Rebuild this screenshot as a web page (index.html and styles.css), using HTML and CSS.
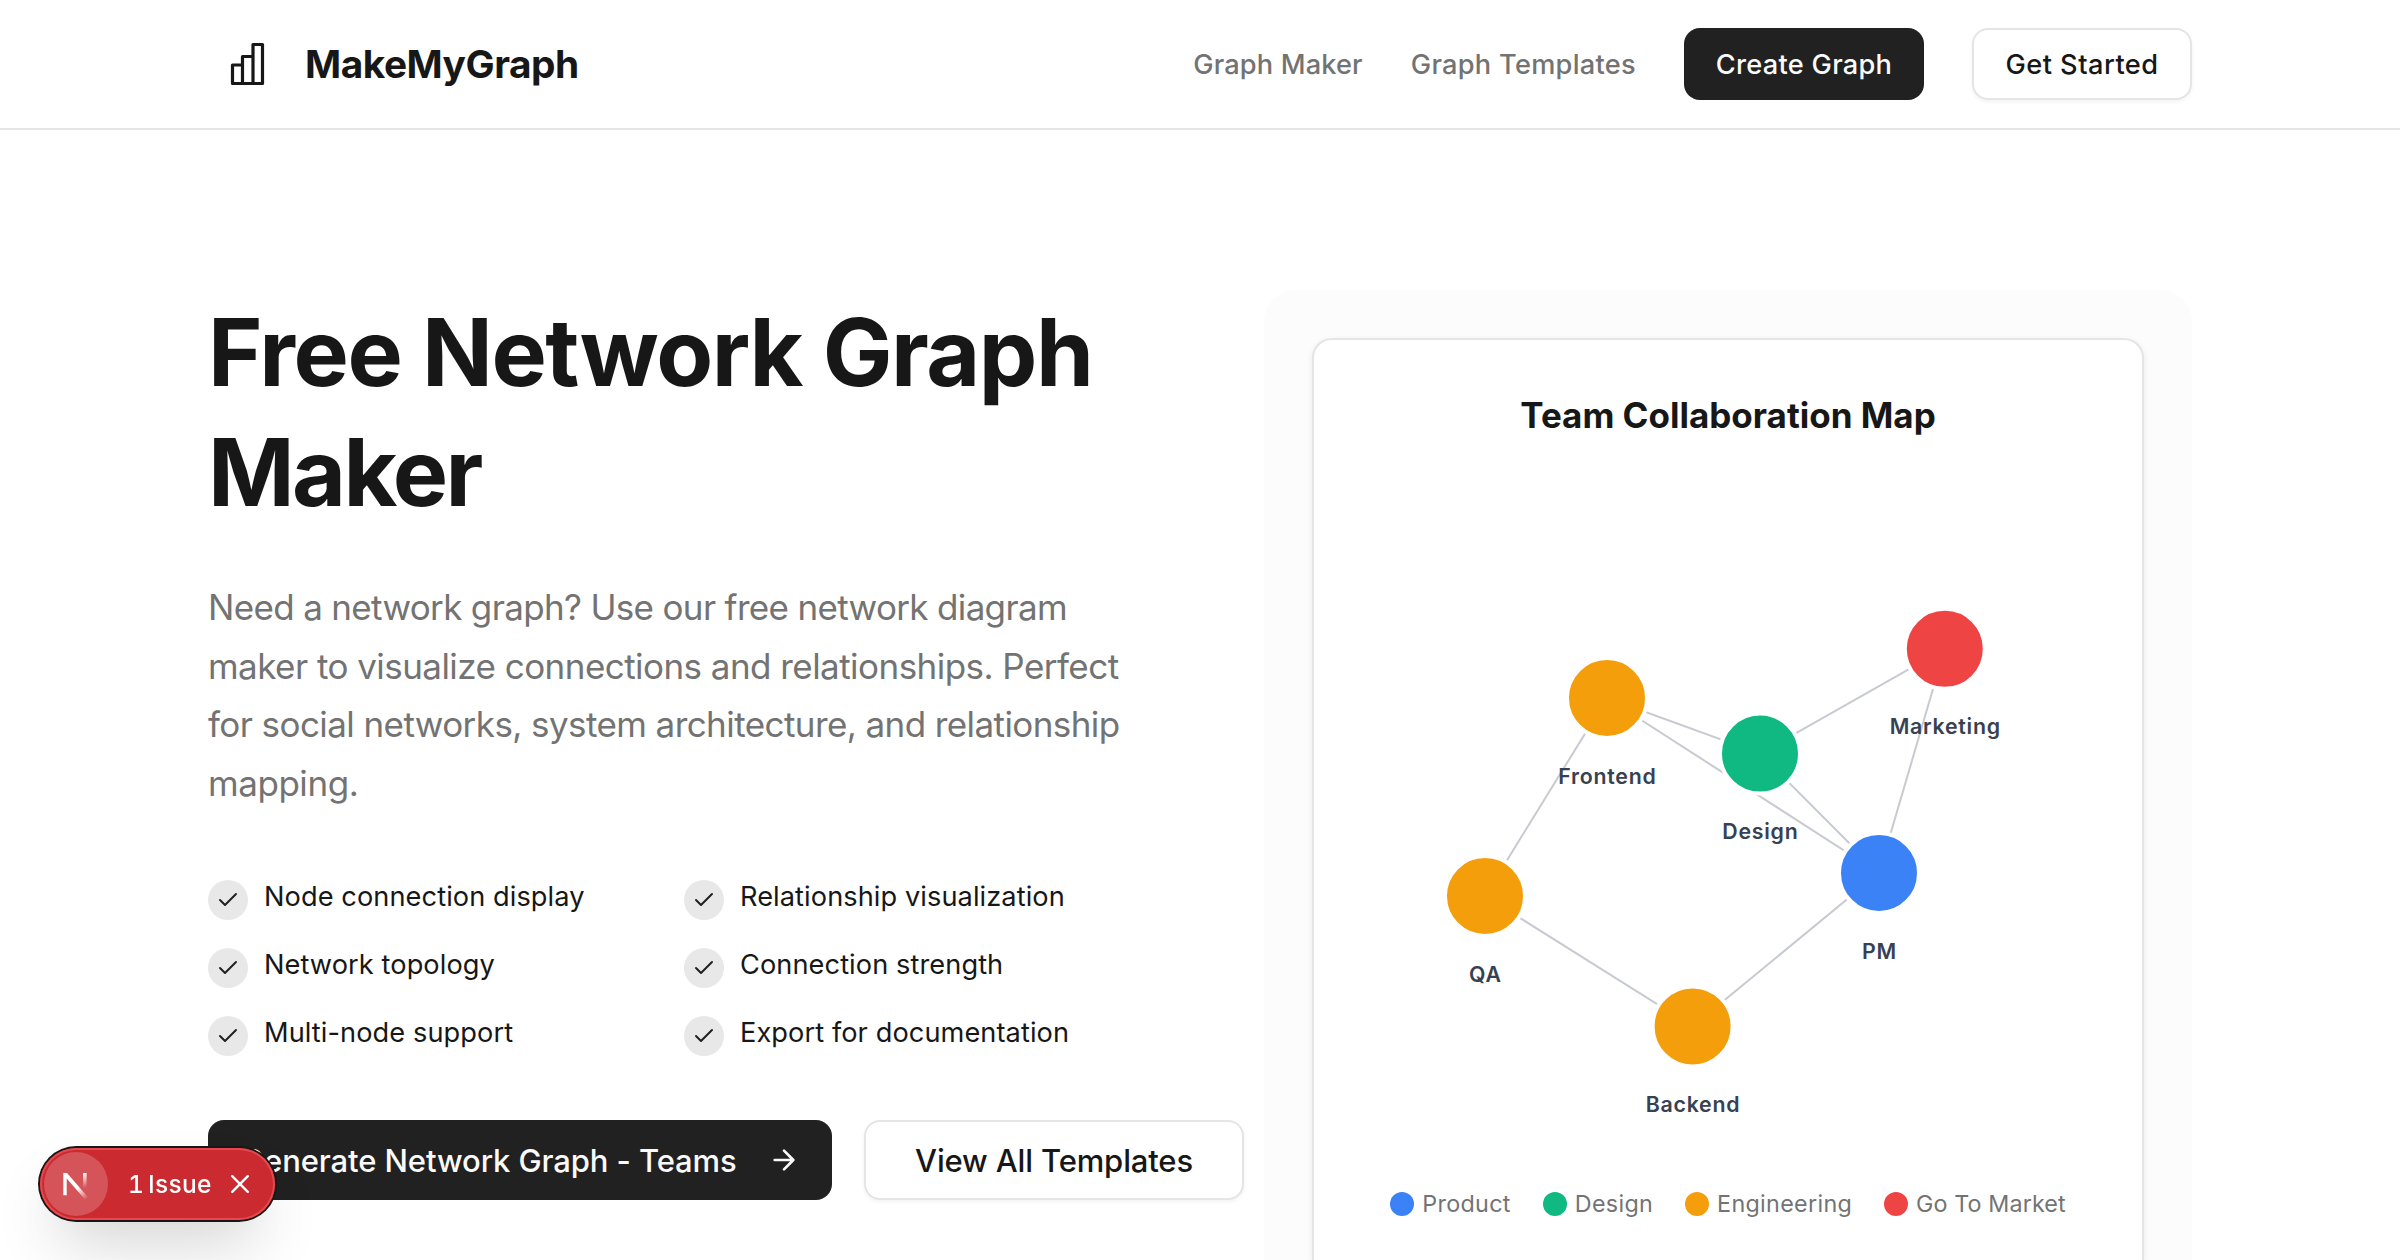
FILE: index.html
```html
<!DOCTYPE html>
<html lang="en">
<head>
<meta charset="utf-8">
<title>MakeMyGraph</title>
<link rel="stylesheet" href="styles.css">
</head>
<body>
<header class="header">
  <div class="container header-inner">
    <a class="brand">
      <svg class="brand-icon" width="40" height="48" viewBox="0 0 40 48" fill="none" stroke="currentColor" stroke-width="3.2" stroke-linejoin="round">
        <path d="M4.5 25H14.5V43.5H4.5ZM14.5 16.5H25V43.5H14.5ZM25 4.5H34.5V43.5H25Z"/>
      </svg>
      <span class="brand-name">MakeMyGraph</span>
    </a>
    <nav class="nav">
      <a class="nav-link nav-maker">Graph Maker</a>
      <a class="nav-link">Graph Templates</a>
      <a class="btn btn-dark nav-create">Create Graph</a>
      <a class="btn btn-outline nav-start">Get Started</a>
    </nav>
  </div>
</header>

<main class="container hero">
  <section class="intro">
    <h1 class="title">Free Network Graph<br><span class="title-end">Maker</span></h1>
    <p class="lead"><span class="lead-first">Need a network graph? Use our free network diagram</span><br><span class="lead-second">maker to visualize connections and relationships. Perfect</span><br>for social networks, system architecture, and relationship<br><span class="lead-last">mapping.</span></p>
    <ul class="features">
      <li class="feature"><span class="tick"><svg width="24" height="24" viewBox="0 0 24 24"><path d="M20 6 9 17l-5-5"/></svg></span>Node connection display</li>
      <li class="feature"><span class="tick"><svg width="24" height="24" viewBox="0 0 24 24"><path d="M20 6 9 17l-5-5"/></svg></span>Relationship visualization</li>
      <li class="feature"><span class="tick"><svg width="24" height="24" viewBox="0 0 24 24"><path d="M20 6 9 17l-5-5"/></svg></span>Network topology</li>
      <li class="feature"><span class="tick"><svg width="24" height="24" viewBox="0 0 24 24"><path d="M20 6 9 17l-5-5"/></svg></span>Connection strength</li>
      <li class="feature"><span class="tick"><svg width="24" height="24" viewBox="0 0 24 24"><path d="M20 6 9 17l-5-5"/></svg></span>Multi-node support</li>
      <li class="feature"><span class="tick"><svg width="24" height="24" viewBox="0 0 24 24"><path d="M20 6 9 17l-5-5"/></svg></span>Export for documentation</li>
    </ul>
    <div class="actions">
      <a class="btn btn-dark btn-generate">Generate Network Graph - Teams
        <svg width="32" height="32" viewBox="0 0 24 24" fill="none" stroke="currentColor" stroke-width="2" stroke-linecap="round" stroke-linejoin="round"><path d="M5 12h14M12 5l7 7-7 7"/></svg>
      </a>
      <a class="btn btn-outline btn-view">View All Templates</a>
    </div>
  </section>

  <section class="panel">
    <div class="card">
      <h2 class="card-title">Team Collaboration Map</h2>
      <svg class="graph" width="732" height="717" viewBox="0 -1 732 717">
        <g class="edges">
          <path d="M245 254 398 309.6"/>
          <path d="M245 254 517 429"/>
          <path d="M398 309.6 582.8 204.8"/>
          <path d="M398 309.6 517 429"/>
          <path d="M582.8 204.8 517 429"/>
          <path d="M245 254 123 452"/>
          <path d="M123 452 330.6 582.4"/>
          <path d="M330.6 582.4 517 429"/>
        </g>
        <g class="nodes">
          <circle class="engineering" cx="245" cy="254" r="40"/>
          <circle class="design" cx="398" cy="309.6" r="40"/>
          <circle class="market" cx="582.8" cy="204.8" r="40"/>
          <circle class="product" cx="517" cy="429" r="40"/>
          <circle class="engineering" cx="123" cy="452" r="40"/>
          <circle class="engineering" cx="330.6" cy="582.4" r="40"/>
        </g>
        <g class="labels">
          <text x="245.4" y="340">Frontend</text>
          <text x="398.4" y="395.4">Design</text>
          <text x="583.2" y="290.4">Marketing</text>
          <text x="517.4" y="515">PM</text>
          <text x="123.4" y="538">QA</text>
          <text x="331" y="668.4">Backend</text>
        </g>
      </svg>
      <div class="legend">
        <span class="legend-item"><i class="dot dot-product"></i>Product</span>
        <span class="legend-item"><i class="dot dot-design"></i>Design</span>
        <span class="legend-item"><i class="dot dot-engineering"></i>Engineering</span>
        <span class="legend-item legend-market"><i class="dot dot-market"></i>Go To Market</span>
      </div>
    </div>
  </section>
</main>

<div class="issue-badge">
  <span class="issue-logo">
    <svg width="64" height="64" viewBox="0 0 64 64">
      <defs>
        <linearGradient id="diag" gradientUnits="userSpaceOnUse" x1="34" y1="36" x2="43" y2="47"><stop offset="0" stop-color="#fff"/><stop offset="1" stop-color="#fff" stop-opacity="0"/></linearGradient>
        <linearGradient id="stem" gradientUnits="userSpaceOnUse" x1="40" y1="21" x2="40" y2="36"><stop offset="0" stop-color="#fff"/><stop offset="1" stop-color="#fff" stop-opacity="0"/></linearGradient>
      </defs>
      <path d="M19.3 21H23L44 45.3 41 47.6 22.7 26.6V43.3H19.3Z" fill="url(#diag)"/>
      <path d="M39 21H42.6V36H39Z" fill="url(#stem)"/>
    </svg>
  </span>
  <span class="issue-text">1 Issue</span>
  <svg class="issue-close" width="20" height="20" viewBox="0 0 20 20" fill="none" stroke="#fff" stroke-width="2.4" stroke-linecap="round"><path d="M2.2 2.2 17.8 17.8M17.8 2.2 2.2 17.8"/></svg>
</div>
</body>
</html>
```
FILE: styles.css
```css
* { box-sizing: border-box; }

body {
  margin: 0;
  height: 1260px;
  overflow: hidden;
  background: #fff;
  color: #171717;
  font-family: "Inter", sans-serif;
}

.container {
  width: 1984px;
  margin: 0 auto;
}

.header { border-bottom: 2px solid #e5e5e5; }

.header-inner {
  display: flex;
  align-items: center;
  justify-content: space-between;
  height: 128px;
}

.brand {
  display: flex;
  align-items: center;
  gap: 36px;
  padding-left: 20px;
}

.brand-name {
  margin-left: 1px;
  padding-bottom: 2px;
  font-size: 38.8px;
  font-weight: 700;
  letter-spacing: -0.47px;
}

.nav {
  display: flex;
  align-items: center;
  gap: 48px;
  font-size: 27.2px;
  font-weight: 500;
  letter-spacing: 0.28px;
}

.nav-link { color: #737373; }
.nav-maker { letter-spacing: 0.15px; }

.btn {
  display: flex;
  align-items: center;
  justify-content: center;
  flex: none;
  border-radius: 16px;
  white-space: nowrap;
  font-weight: 500;
}

.btn-dark {
  background: #212121;
  color: #fafafa;
}

.btn-outline {
  border: 2px solid #e5e5e5;
  background: #fff;
  box-shadow: 0 2px 4px rgba(0, 0, 0, 0.05);
}

.nav-create {
  width: 240px;
  height: 72px;
}

.nav-start {
  width: 220px;
  height: 72px;
  letter-spacing: 0.48px;
}

.hero {
  display: grid;
  grid-template-columns: 928px 928px;
  gap: 128px;
  padding-top: 160px;
}

.intro { padding-top: 2px; }

.title {
  margin: 0;
  font-size: 93px;
  font-weight: 700;
  line-height: 120px;
  letter-spacing: -1.45px;
  white-space: nowrap;
}

.title-end { letter-spacing: -2.6px; }

.lead {
  margin: 46px 0 64px;
  color: #737373;
  font-size: 35px;
  line-height: 58.5px;
  letter-spacing: -0.58px;
  white-space: nowrap;
}

.lead-first { letter-spacing: -0.66px; }
.lead-second { letter-spacing: -0.545px; }
.lead-last { letter-spacing: -0.45px; }

.features {
  display: grid;
  grid-template-columns: 1fr 1fr;
  gap: 24px;
  margin: 0 0 64px;
  padding: 0;
  list-style: none;
  font-size: 27.2px;
  line-height: 42px;
  letter-spacing: 0.08px;
}

.feature {
  display: flex;
  gap: 16px;
  height: 44px;
}

.tick {
  display: flex;
  align-items: center;
  justify-content: center;
  width: 40px;
  height: 40px;
  margin-top: 4px;
  border-radius: 50%;
  background: #e8e8e8;
}

.tick path {
  fill: none;
  stroke: #212121;
  stroke-width: 2;
  stroke-linecap: round;
  stroke-linejoin: round;
}

.actions {
  display: flex;
  gap: 32px;
  font-size: 31px;
}

.btn-generate {
  justify-content: space-between;
  width: 624px;
  height: 80px;
  padding: 0 32px 0 33px;
  letter-spacing: -0.1px;
}

.btn-view {
  width: 380px;
  height: 80px;
  letter-spacing: -0.15px;
}

.panel {
  height: 970px;
  padding: 48px 48px 0;
  border-radius: 32px 32px 0 0;
  background: #fcfcfc;
}

.card {
  height: 922px;
  padding: 47px 48px 0;
  border: 2px solid #e5e5e5;
  border-bottom: 0;
  border-radius: 20px 20px 0 0;
  background: #fff;
  box-shadow: 0 2px 6px rgba(0, 0, 0, 0.08);
}

.card-title {
  margin: 0;
  font-size: 35px;
  font-weight: 650;
  line-height: 56px;
  letter-spacing: 0;
  text-align: center;
}

.graph { display: block; }

.edges {
  fill: none;
  stroke: #c7cad0;
  stroke-width: 2;
}

.nodes {
  stroke: #fff;
  stroke-width: 4;
}

.product { fill: #3b82f6; }
.design { fill: #10b981; }
.engineering { fill: #f59e0b; }
.market { fill: #ef4444; }

.labels {
  fill: #374151;
  font-size: 21.3px;
  font-weight: 600;
  letter-spacing: 0.75px;
  text-anchor: middle;
}

.legend {
  display: flex;
  justify-content: center;
  gap: 32px;
  padding-top: 24px;
  color: #737373;
  font-size: 23.3px;
  line-height: 40px;
  letter-spacing: 0.32px;
  white-space: nowrap;
}

.legend-item {
  display: flex;
  align-items: center;
  gap: 8px;
}

.legend-market { letter-spacing: 0.1px; }

.dot {
  width: 24px;
  height: 24px;
  border-radius: 50%;
}

.dot-product { background: #3b82f6; }
.dot-design { background: #10b981; }
.dot-engineering { background: #f59e0b; }
.dot-market { background: #ef4444; }

.issue-badge {
  position: fixed;
  left: 40px;
  top: 1148px;
  display: flex;
  align-items: center;
  width: 235px;
  height: 72px;
  padding-left: 4px;
  border-radius: 36px;
  background: #ca2a30;
  color: #fff;
  box-shadow:
    inset 0 0 0 2px #e5484d,
    0 0 0 2px #171717,
    0 32px 64px -16px rgba(0, 0, 0, 0.24),
    0 4px 32px rgba(0, 0, 0, 0.03);
}

.issue-logo {
  width: 64px;
  height: 64px;
  border-radius: 50%;
  background: rgba(255, 255, 255, 0.2);
}

.issue-text {
  width: 102px;
  margin-left: 20px;
  padding-bottom: 1px;
  font-size: 24.5px;
  font-weight: 500;
  font-variant-numeric: tabular-nums;
  word-spacing: -3px;
  letter-spacing: 0.3px;
}
```
